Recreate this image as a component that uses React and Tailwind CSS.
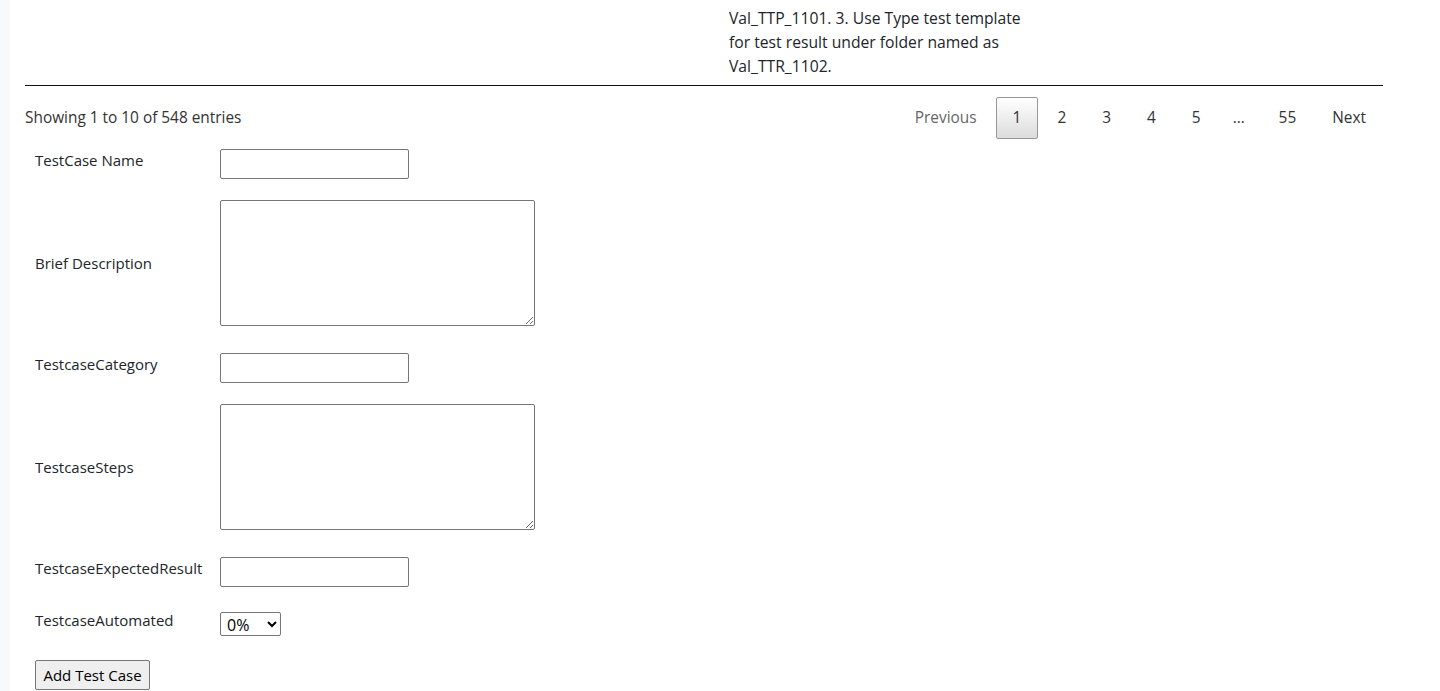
import React from 'react';

const FONT = { fontFamily: '"Open Sans", "Noto Sans", sans-serif' };

const PAGES = ['1', '2', '3', '4', '5', '…', '55'];

const INPUT = 'w-[189px] h-[30px] border border-[#767676] rounded-[2px] bg-white';
const AREA = 'w-[315px] h-[126px] border border-[#767676] rounded-[2px] bg-white';

// ─── Form row ────────────────────────────────────────────
function Row({ label, children, className = '', labelClass = '', center = false }) {
  return (
    <div className={`flex ${center ? 'items-center' : 'items-start'} ${className}`}>
      <div className={`w-[195px] shrink-0 pl-[10px] text-[15px] leading-6 text-[#212529] ${labelClass}`}>{label}</div>
      {children}
    </div>
  );
}

export default function App() {
  return (
    <div className="flex min-h-screen bg-white" style={FONT}>
      <div className="w-[10px] shrink-0 bg-[#f8f9fa]" />

      <div className="w-[1358px] ml-[15px]">
        {/* tail of the table */}
        <div className="h-[86px] overflow-hidden flex flex-col justify-end border-b border-[#111]">
          <div className="pl-[704px] pb-[7px] text-[15.7px] leading-6 text-[#212529]">
            <p>Val_TTP_1101. 3. Use Type test template</p>
            <p>for test result under folder named as</p>
            <p>Val_TTR_1102.</p>
          </div>
        </div>

        {/* info + paging */}
        <div className="flex items-center justify-between h-[63px]">
          <p className="text-[15.4px] text-[#333]">Showing 1 to 10 of 548 entries</p>
          <div className="flex items-center text-[15.4px] leading-6 text-[#333]">
            <span className="px-[16px] py-[8px] border border-transparent text-[#666]">Previous</span>
            {PAGES.map((p, i) => {
              if (p === '…') return <span key={i} className="px-[15px]">{p}</span>;
              return (
                <span
                  key={i}
                  className={
                    i === 0
                      ? 'ml-[2px] px-[16px] py-[8px] border border-[#979797] rounded-[2px] bg-gradient-to-b from-white to-[#dcdcdc]'
                      : 'ml-[2px] px-[16px] py-[8px] border border-transparent'
                  }
                >
                  {p}
                </span>
              );
            })}
            <span className="ml-[2px] px-[16px] py-[8px] border border-transparent">Next</span>
          </div>
        </div>

        {/* add form */}
        <div className="flex flex-col">
          <Row label="TestCase Name" labelClass="-mt-[1px]">
            <input className={INPUT} />
          </Row>
          <Row label="Brief Description" className="mt-[21px]" center>
            <textarea className={AREA} />
          </Row>
          <Row label="TestcaseCategory" className="mt-[27px]" labelClass="-mt-[1px]">
            <input className={INPUT} />
          </Row>
          <Row label="TestcaseSteps" className="mt-[21px]" center>
            <textarea className={AREA} />
          </Row>
          <Row label="TestcaseExpectedResult" className="mt-[27px]" labelClass="-mt-[1px]">
            <input className={INPUT} />
          </Row>
          <Row label="TestcaseAutomated" className="mt-[25px]" labelClass="-mt-[4px]">
            <select className="w-[61px] h-[24px] border border-[#767676] rounded-[2px] bg-white text-[16px] leading-5 pl-[2px] text-black">
              <option>0%</option>
              <option>25%</option>
              <option>50%</option>
              <option>75%</option>
              <option>100%</option>
            </select>
          </Row>
          <div className="pl-[10px] mt-[24px]">
            <button className="w-[115px] h-[30px] border border-[#767676] rounded-[2px] bg-[#efefef] text-[15px] text-black">
              Add Test Case
            </button>
          </div>
        </div>
      </div>
    </div>
  );
}
